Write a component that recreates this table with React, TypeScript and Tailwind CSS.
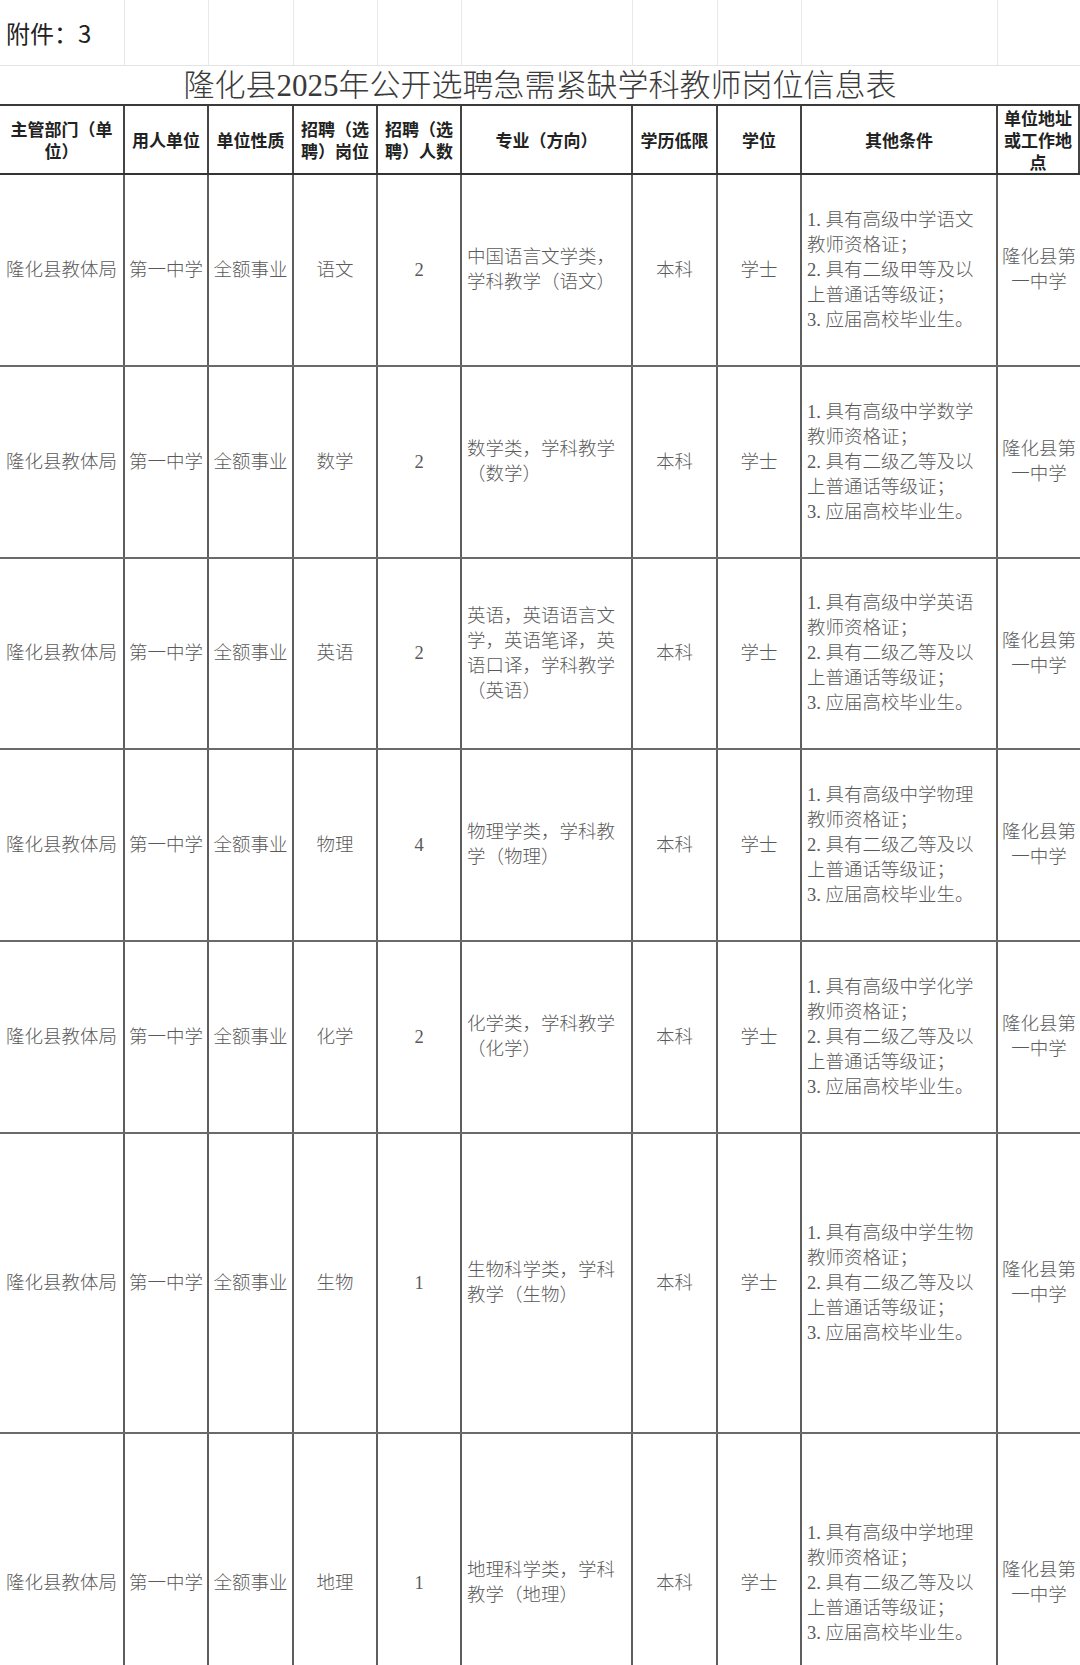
const cols = 'grid grid-cols-[125px_84px_85px_84px_84px_171px_85px_84px_196px_82px]';

const serif = "font-['Liberation_Serif','Noto_Sans_CJK_SC',serif]";
const sans = "font-['Noto_Sans_CJK_SC','Liberation_Sans',sans-serif]";

const headers: string[][] = [
    ['主管部门（单', '位）'],
    ['用人单位'],
    ['单位性质'],
    ['招聘（选', '聘）岗位'],
    ['招聘（选', '聘）人数'],
    ['专业（方向）'],
    ['学历低限'],
    ['学位'],
    ['其他条件'],
    ['单位地址', '或工作地', '点'],
];

type Row = {
    subject: string;
    count: string;
    major: string[];
    level: string;
    height: string;
};

const rows: Row[] = [
    { subject: '语文', count: '2', major: ['中国语言文学类，', '学科教学（语文）'], level: '甲', height: 'h-[192px]' },
    { subject: '数学', count: '2', major: ['数学类，学科教学', '（数学）'], level: '乙', height: 'h-[192px]' },
    {
        subject: '英语',
        count: '2',
        major: ['英语，英语语言文', '学，英语笔译，英', '语口译，学科教学', '（英语）'],
        level: '乙',
        height: 'h-[191px]',
    },
    { subject: '物理', count: '4', major: ['物理学类，学科教', '学（物理）'], level: '乙', height: 'h-[192px]' },
    { subject: '化学', count: '2', major: ['化学类，学科教学', '（化学）'], level: '乙', height: 'h-[192px]' },
    { subject: '生物', count: '1', major: ['生物科学类，学科', '教学（生物）'], level: '乙', height: 'h-[300px]' },
    { subject: '地理', count: '1', major: ['地理科学类，学科', '教学（地理）'], level: '乙', height: 'h-[300px]' },
];

function Lines({ lines }: { lines: string[] }) {
    return (
        <>
            {lines.map((l, i) => (
                <span key={i} className="block whitespace-nowrap">
                    {l}
                </span>
            ))}
        </>
    );
}

function Cell({
    children,
    last,
    left,
}: {
    children: React.ReactNode;
    last?: boolean;
    left?: boolean;
}) {
    return (
        <div
            className={`flex items-center ${left ? 'justify-start pl-[5px]' : 'justify-center text-center'} ${
                last ? '' : 'border-r-2 border-[#5e5e5e]'
            }`}
        >
            <div>{children}</div>
        </div>
    );
}

export default function App() {
    return (
        <div className="h-[1665px] w-[1080px] overflow-hidden bg-white text-[#222]">
            {/* sheet row with the attachment label */}
            <div className={`${cols} h-[66px] border-b border-[#e3e3e3]`}>
                <div className={`flex items-center border-r border-[#e8e8e8] pl-[6px] text-[24px] ${sans}`}>
                    附件：3
                </div>
                {Array.from({ length: 9 }).map((_, i) => (
                    <div key={i} className={i < 8 ? 'border-r border-[#e8e8e8]' : ''} />
                ))}
            </div>

            <div
                className={`flex h-[40px] items-center justify-center border-b-2 border-[#3a3a3a] text-[31px] font-light leading-none text-[#3a3a3a] ${serif}`}
            >
                隆化县2025年公开选聘急需紧缺学科教师岗位信息表
            </div>

            <div
                className={`${cols} h-[69px] border-b-2 border-[#333] text-[17px] font-bold leading-[22px] text-[#222] ${sans}`}
            >
                {headers.map((h, i) => (
                    <div key={i} className="flex items-center justify-center border-r-2 border-[#444] text-center">
                        <div>
                            <Lines lines={h} />
                        </div>
                    </div>
                ))}
            </div>

            {rows.map((r, idx) => (
                <div
                    key={idx}
                    className={`${cols} ${r.height} border-b-2 border-[#6a6a6a] text-[18.5px] font-light leading-[25px] text-[#5a5a5a] ${serif}`}
                >
                    <Cell>隆化县教体局</Cell>
                    <Cell>第一中学</Cell>
                    <Cell>全额事业</Cell>
                    <Cell>{r.subject}</Cell>
                    <Cell>{r.count}</Cell>
                    <Cell left>
                        <Lines lines={r.major} />
                    </Cell>
                    <Cell>本科</Cell>
                    <Cell>学士</Cell>
                    <Cell left>
                        <Lines
                            lines={[
                                `1. 具有高级中学${r.subject}`,
                                '教师资格证；',
                                `2. 具有二级${r.level}等及以`,
                                '上普通话等级证；',
                                '3. 应届高校毕业生。',
                            ]}
                        />
                    </Cell>
                    <Cell last>
                        <Lines lines={['隆化县第', '一中学']} />
                    </Cell>
                </div>
            ))}
        </div>
    );
}
